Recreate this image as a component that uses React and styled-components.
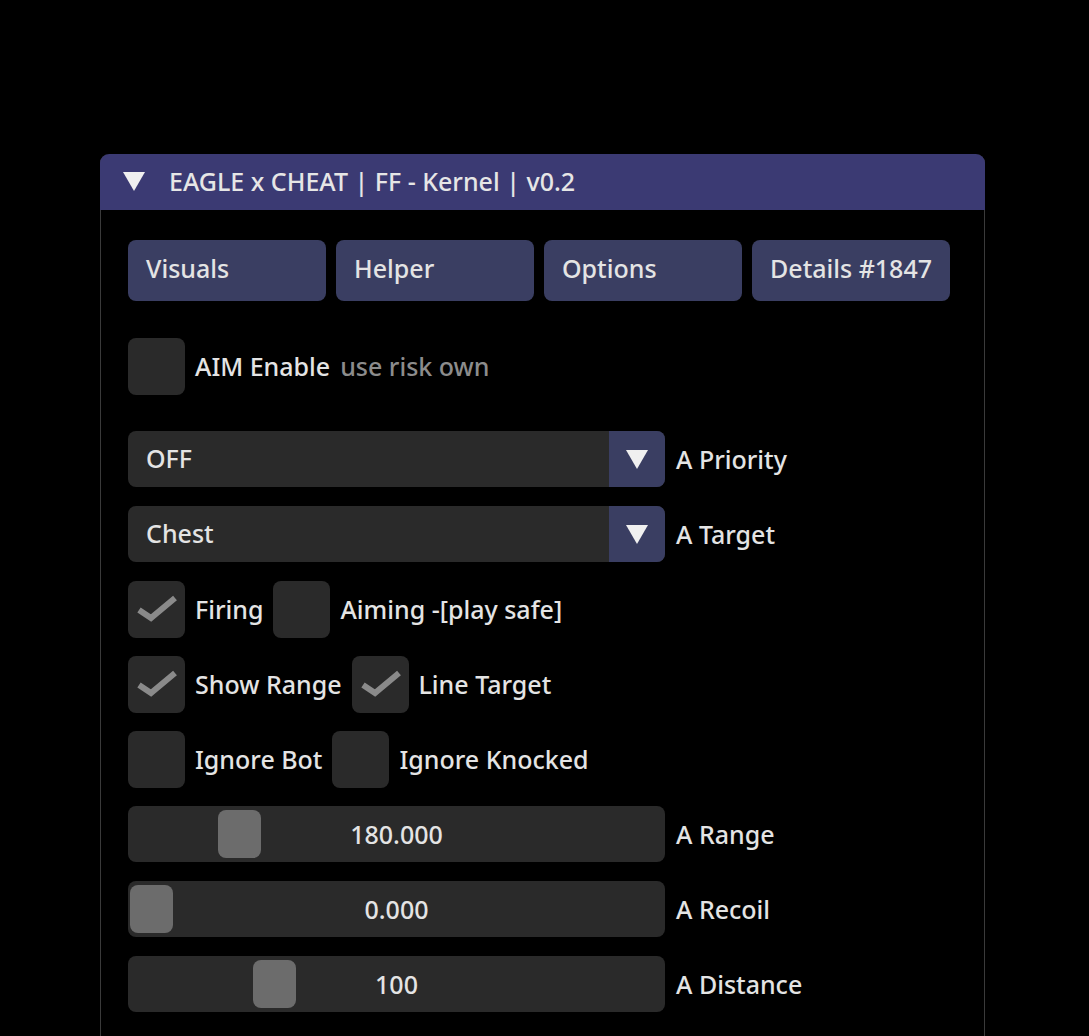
import React from "react";
import styled, { createGlobalStyle } from "styled-components";

const GlobalStyle = createGlobalStyle`
  html, body {
    margin: 0;
    padding: 0;
    background: #000;
    overflow: hidden;
  }
  body {
    font-family: "Noto Sans", "Open Sans", sans-serif;
    font-weight: 500;
    color: #e4e4e4;
  }
`;

const Page = styled.div`
  padding: 154px 0 0 100px;
`;

const Window = styled.div`
  width: 885px;
  box-sizing: border-box;
  background: #000;
  border-left: 1px solid #3a3a3a;
  border-right: 1px solid #3a3a3a;
  border-radius: 9px 9px 0 0;
`;

const TitleBar = styled.div`
  height: 56px;
  margin: 0 -1px;
  box-sizing: border-box;
  padding: 0 0 2px 23px;
  background: #3b3a73;
  border-radius: 9px 9px 0 0;
  display: flex;
  align-items: center;
  gap: 24px;
  font-size: 25px;
  color: #e6e6e6;
`;

const Body = styled.div`
  display: flex;
  flex-direction: column;
  padding: 30px 28px 60px 27px;
`;

const TabRow = styled.div`
  display: flex;
  gap: 10px;
`;

const Tab = styled.div`
  width: 198px;
  height: 61px;
  box-sizing: border-box;
  background: #3a3e62;
  border-radius: 8px;
  display: flex;
  align-items: center;
  padding: 0 0 6px 18px;
  font-size: 25px;
`;

const Row = styled.div`
  display: flex;
  align-items: center;
  height: 56px;
  margin-top: ${(p) => p.$gap || 19}px;
`;

const Box = styled.div`
  width: 57px;
  height: 57px;
  flex: none;
  border-radius: 8px;
  background: #2a2a2a;
  display: flex;
  align-items: center;
  justify-content: center;
`;

const Label = styled.span`
  margin: 0 10px;
  font-size: 25px;
  white-space: nowrap;
  color: ${(p) => (p.$dim ? "#8c8c8c" : "#e4e4e4")};
  ${(p) => (p.$tight ? "margin-left: 0;" : "")}
`;

const Combo = styled.div`
  width: 537px;
  height: 56px;
  flex: none;
  border-radius: 8px;
  background: #2a2a2a;
  display: flex;
  overflow: hidden;
`;

const ComboValue = styled.div`
  flex: 1;
  display: flex;
  align-items: center;
  padding: 0 0 2px 18px;
  font-size: 25px;
`;

const ComboArrow = styled.div`
  width: 56px;
  background: #3a3e62;
  display: flex;
  align-items: center;
  justify-content: center;
`;

const Slider = styled.div`
  position: relative;
  width: 537px;
  height: 56px;
  flex: none;
  border-radius: 8px;
  background: #2a2a2a;
  display: flex;
  align-items: center;
  justify-content: center;
  font-size: 25px;
`;

const Grab = styled.div`
  position: absolute;
  top: 4px;
  width: 43px;
  height: 48px;
  border-radius: 8px;
  background: #6c6c6c;
`;

const SliderText = styled.span`
  position: relative;
`;

const SideLabel = styled.span`
  margin-left: 11px;
  font-size: 25px;
  white-space: nowrap;
`;

const Triangle = ({ w = 22, h = 19 }) => (
  <svg width={w} height={h} viewBox={`0 0 ${w} ${h}`}>
    <polygon points={`0,0 ${w},0 ${w / 2},${h}`} fill="#f0f0f0" />
  </svg>
);

const Check = () => (
  <svg width="57" height="57" viewBox="0 0 57 57">
    <polyline
      points="11,29 23,37 47,17"
      fill="none"
      stroke="#8a8a8a"
      strokeWidth="6"
      strokeLinejoin="miter"
    />
  </svg>
);

const CheckBox = ({ checked }) => <Box>{checked ? <Check /> : null}</Box>;

const CheckItem = ({ checked, label }) => (
  <>
    <CheckBox checked={checked} />
    <Label>{label}</Label>
  </>
);

const ComboRow = ({ value, label, gap }) => (
  <Row $gap={gap}>
    <Combo>
      <ComboValue>{value}</ComboValue>
      <ComboArrow>
        <Triangle />
      </ComboArrow>
    </Combo>
    <SideLabel>{label}</SideLabel>
  </Row>
);

const SliderRow = ({ value, label, pos }) => (
  <Row>
    <Slider>
      <Grab style={{ left: 2 + pos * (537 - 4 - 43) }} />
      <SliderText>{value}</SliderText>
    </Slider>
    <SideLabel>{label}</SideLabel>
  </Row>
);

export default function App() {
  return (
    <>
      <GlobalStyle />
      <Page>
        <Window>
          <TitleBar>
            <Triangle w={22} h={19} />
            <span>EAGLE x CHEAT | FF - Kernel | v0.2</span>
          </TitleBar>
          <Body>
            <TabRow>
              <Tab>Visuals</Tab>
              <Tab>Helper</Tab>
              <Tab>Options</Tab>
              <Tab>Details #1847</Tab>
            </TabRow>
            <Row $gap={37}>
              <CheckBox />
              <Label>AIM Enable</Label>
              <Label $dim $tight>use risk own</Label>
            </Row>
            <ComboRow gap={37} value="OFF" label="A Priority" />
            <ComboRow value="Chest" label="A Target" />
            <Row>
              <CheckItem checked label="Firing" />
              <CheckItem label="Aiming -[play safe]" />
            </Row>
            <Row>
              <CheckItem checked label="Show Range" />
              <CheckItem checked label="Line Target" />
            </Row>
            <Row>
              <CheckItem label="Ignore Bot" />
              <CheckItem label="Ignore Knocked" />
            </Row>
            <SliderRow value="180.000" label="A Range" pos={0.18} />
            <SliderRow value="0.000" label="A Recoil" pos={0} />
            <SliderRow value="100" label="A Distance" pos={0.25} />
          </Body>
        </Window>
      </Page>
    </>
  );
}
